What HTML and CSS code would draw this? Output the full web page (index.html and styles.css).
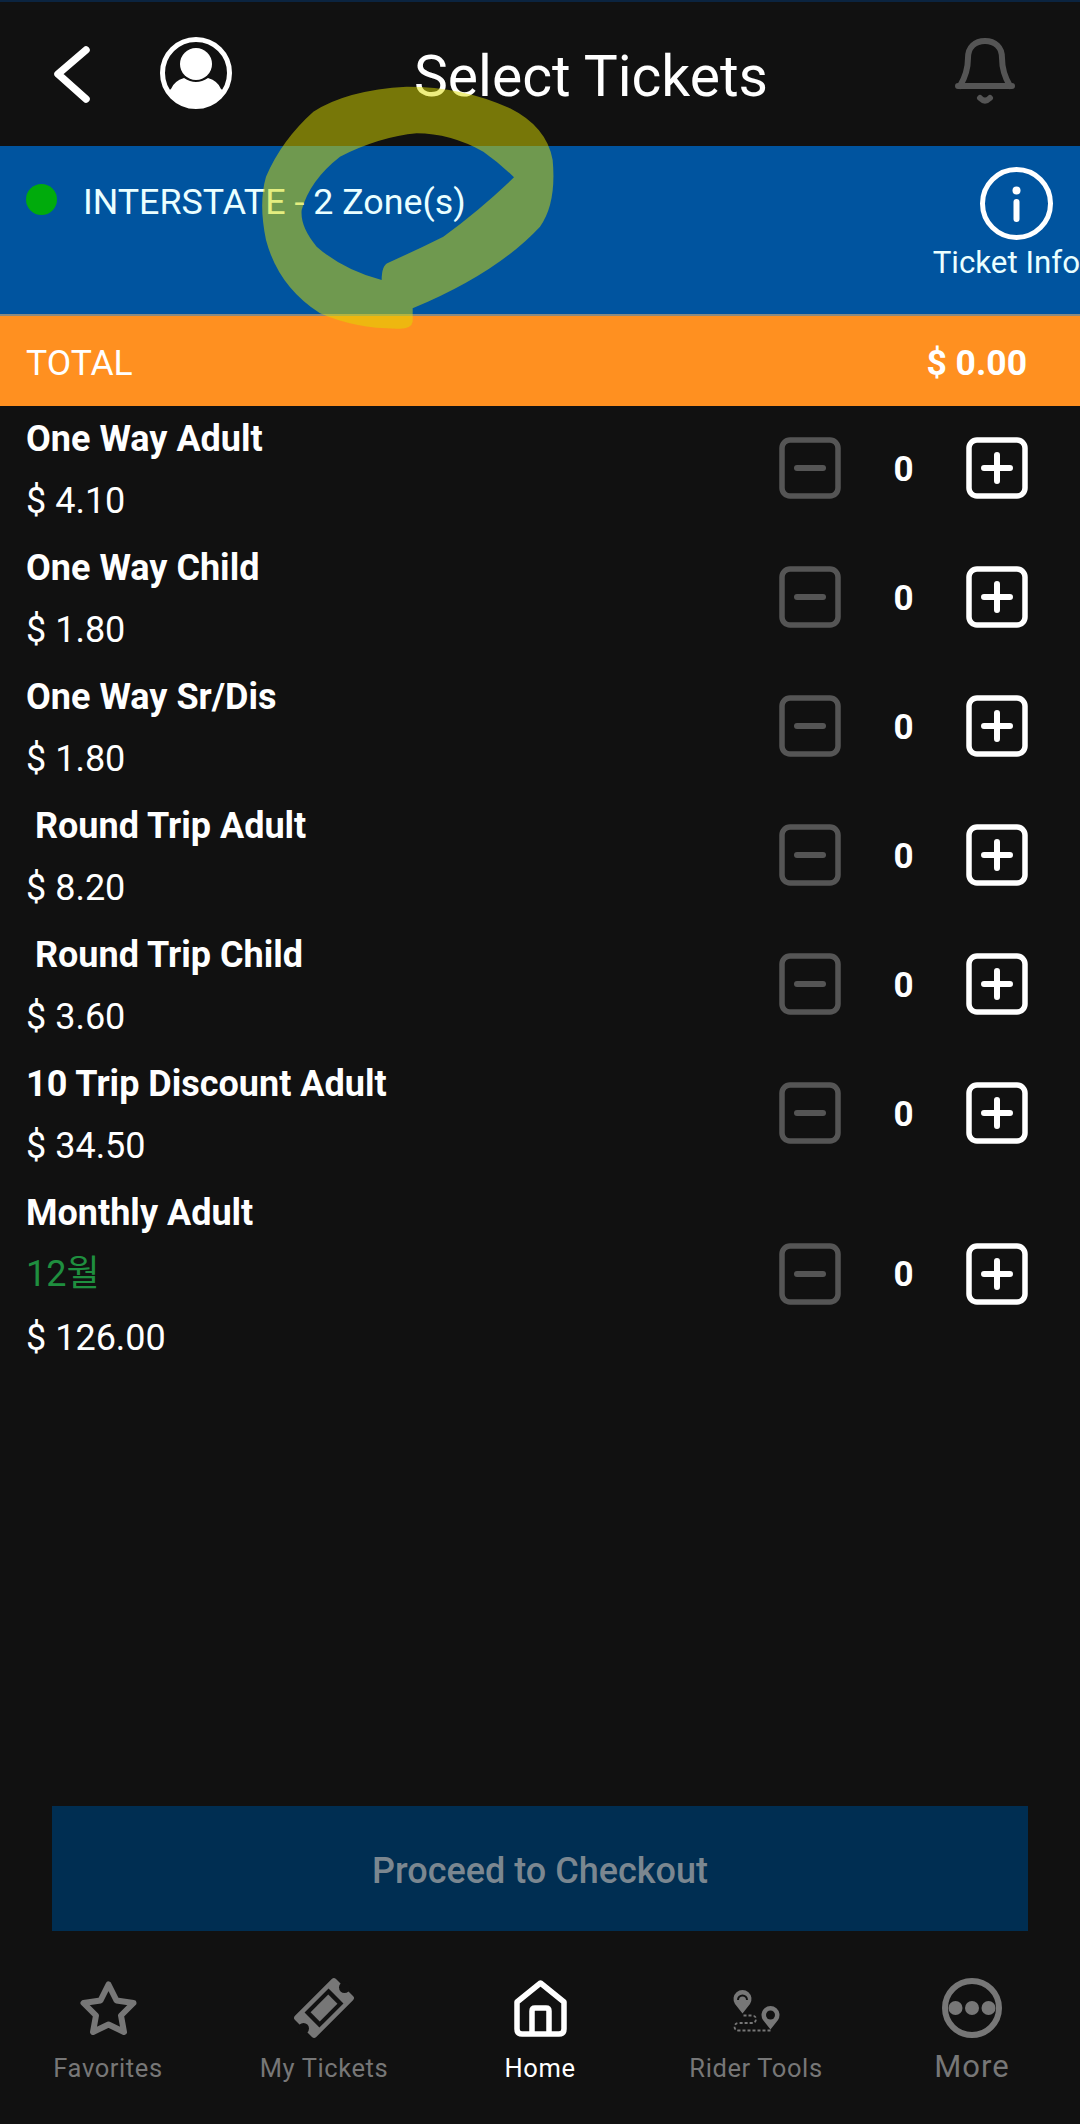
FILE: index.html
```html
<!DOCTYPE html>
<html lang="en">
<head>
    <meta charset="UTF-8">
    <meta name="viewport" content="width=device-width, initial-scale=1.0">
    <title>Select Tickets</title>
    <link rel="stylesheet" href="styles.css">
</head>
<body>
    <svg class="defs">
        <symbol id="minus" viewBox="0 0 62 62">
            <rect x="3" y="3" width="56" height="56" rx="8" fill="none" stroke="#555" stroke-width="5.5"></rect>
            <path d="M18 31H44" stroke="#555" stroke-width="6" stroke-linecap="round"></path>
        </symbol>
        <symbol id="plus" viewBox="0 0 62 62">
            <rect x="3" y="3" width="56" height="56" rx="8" fill="none" stroke="#fff" stroke-width="5.5"></rect>
            <path d="M18 31H44M31 18V44" stroke="#fff" stroke-width="6" stroke-linecap="round"></path>
        </symbol>
    </svg>

    <header class="top-bar">
        <svg class="back-icon" width="44" height="64" viewBox="0 0 44 64">
            <path d="M36 8L8 32L36 57" fill="none" stroke="#fff" stroke-width="7.5" stroke-linecap="round" stroke-linejoin="round"></path>
        </svg>
        <svg class="profile-icon" width="72" height="72" viewBox="0 0 72 72">
            <circle cx="36" cy="36" r="33.5" fill="none" stroke="#fff" stroke-width="5"></circle>
            <circle cx="36" cy="27" r="16" fill="#fff"></circle>
            <path d="M8 54L11 52Q14 44 24 41Q36 49 48 41Q58 44 61 52L64 54A33 33 0 0 1 8 54Z" fill="#fff"></path>
        </svg>
        <h1 class="page-title">Select Tickets</h1>
        <svg class="bell-icon" width="60" height="66" viewBox="0 0 60 66">
            <path d="M3 48H57M5 48C11 38 13 30 13 20C13 9 20 3 30 3C40 3 47 9 47 20C47 30 49 38 55 48" fill="none" stroke="#555" stroke-width="6" stroke-linecap="round"></path>
            <path d="M25 60Q30 65 35 60" fill="none" stroke="#555" stroke-width="6" stroke-linecap="round"></path>
        </svg>
    </header>

    <section class="zone-bar">
        <span class="zone-dot"></span>
        <span class="zone-name">INTERSTATE - 2 Zone(s)</span>
        <div class="ticket-info">
            <svg class="info-icon" width="73" height="73" viewBox="0 0 73 73">
                <circle cx="36.5" cy="36.5" r="34" fill="none" stroke="#fff" stroke-width="5"></circle>
                <circle cx="36.5" cy="23.5" r="4" fill="#fff"></circle>
                <path d="M36.5 35V52" stroke="#fff" stroke-width="6" stroke-linecap="round"></path>
            </svg>
            <span class="info-label">Ticket Info</span>
        </div>
    </section>

    <section class="total-bar">
        <span>TOTAL</span>
        <span class="total-amount">$ 0.00</span>
    </section>

    <main class="tickets">
        <div class="ticket-row">
            <div class="ticket-text">
                <div class="ticket-name">One Way Adult</div>
                <div class="ticket-price">$ 4.10</div>
            </div>
            <div class="stepper">
                <svg class="step-btn"><use href="#minus"></use></svg>
                <span class="step-count">0</span>
                <svg class="step-btn"><use href="#plus"></use></svg>
            </div>
        </div>
        <div class="ticket-row">
            <div class="ticket-text">
                <div class="ticket-name">One Way Child</div>
                <div class="ticket-price">$ 1.80</div>
            </div>
            <div class="stepper">
                <svg class="step-btn"><use href="#minus"></use></svg>
                <span class="step-count">0</span>
                <svg class="step-btn"><use href="#plus"></use></svg>
            </div>
        </div>
        <div class="ticket-row">
            <div class="ticket-text">
                <div class="ticket-name">One Way Sr/Dis</div>
                <div class="ticket-price">$ 1.80</div>
            </div>
            <div class="stepper">
                <svg class="step-btn"><use href="#minus"></use></svg>
                <span class="step-count">0</span>
                <svg class="step-btn"><use href="#plus"></use></svg>
            </div>
        </div>
        <div class="ticket-row">
            <div class="ticket-text">
                <div class="ticket-name"> Round Trip Adult</div>
                <div class="ticket-price">$ 8.20</div>
            </div>
            <div class="stepper">
                <svg class="step-btn"><use href="#minus"></use></svg>
                <span class="step-count">0</span>
                <svg class="step-btn"><use href="#plus"></use></svg>
            </div>
        </div>
        <div class="ticket-row">
            <div class="ticket-text">
                <div class="ticket-name"> Round Trip Child</div>
                <div class="ticket-price">$ 3.60</div>
            </div>
            <div class="stepper">
                <svg class="step-btn"><use href="#minus"></use></svg>
                <span class="step-count">0</span>
                <svg class="step-btn"><use href="#plus"></use></svg>
            </div>
        </div>
        <div class="ticket-row">
            <div class="ticket-text">
                <div class="ticket-name">10 Trip Discount Adult</div>
                <div class="ticket-price">$ 34.50</div>
            </div>
            <div class="stepper">
                <svg class="step-btn"><use href="#minus"></use></svg>
                <span class="step-count">0</span>
                <svg class="step-btn"><use href="#plus"></use></svg>
            </div>
        </div>
        <div class="ticket-row">
            <div class="ticket-text">
                <div class="ticket-name">Monthly Adult</div>
                <div class="ticket-month">12월</div>
                <div class="ticket-price">$ 126.00</div>
            </div>
            <div class="stepper">
                <svg class="step-btn"><use href="#minus"></use></svg>
                <span class="step-count">0</span>
                <svg class="step-btn"><use href="#plus"></use></svg>
            </div>
        </div>
    </main>

    <button class="checkout-btn" type="button">Proceed to Checkout</button>

    <nav class="bottom-nav">
        <div class="nav-item">
            <span class="nav-icon">
                <svg width="57" height="54" viewBox="0 0 57 54">
                    <polygon points="28.5,3.5 36.5,19.5 53.5,22 41,34.5 44,51 28.5,43.5 13,51 16,34.5 3.5,22 20.5,19.5" fill="none" stroke="#777" stroke-width="6" stroke-linejoin="round"></polygon>
                </svg>
            </span>
            <span class="nav-label">Favorites</span>
        </div>
        <div class="nav-item">
            <span class="nav-icon">
                <svg width="62" height="64" viewBox="0 0 62 64">
                    <g transform="translate(31 32) rotate(-45)">
                        <rect x="-29" y="-15" width="58" height="30" rx="3" fill="#777"></rect>
                        <circle cx="-29" cy="0" r="5.5" fill="#111"></circle>
                        <circle cx="29" cy="0" r="5.5" fill="#111"></circle>
                        <rect x="-17" y="-10.5" width="34" height="21" fill="#111"></rect>
                        <rect x="-12.5" y="-6.5" width="25" height="13" fill="#777"></rect>
                    </g>
                </svg>
            </span>
            <span class="nav-label">My Tickets</span>
        </div>
        <div class="nav-item nav-active">
            <span class="nav-icon">
                <svg width="53" height="57" viewBox="0 0 53 57">
                    <path d="M26.5 3L50 22V49Q50 54 45 54H8Q3 54 3 49V22Z" fill="none" stroke="#fff" stroke-width="5.5" stroke-linejoin="round"></path>
                    <path d="M18 54V31Q18 28 21 28H32Q35 28 35 31V54" fill="none" stroke="#fff" stroke-width="5.5"></path>
                </svg>
            </span>
            <span class="nav-label">Home</span>
        </div>
        <div class="nav-item">
            <span class="nav-icon">
                <svg width="75" height="65" viewBox="-1.5 0 75 65">
                    <path d="M22 37.5L14.5 28A9 9 0 1 1 29.5 28Z" fill="#777"></path>
                    <path d="M17.5 24A4.5 4.5 0 0 1 26.5 24" fill="none" stroke="#111" stroke-width="2"></path>
                    <path d="M50 53.5L42.5 44A9 9 0 1 1 57.5 44Z" fill="#777"></path>
                    <circle cx="50" cy="39" r="4.5" fill="#111"></circle>
                    <path d="M23 39.5H32Q35.5 40 35.5 43Q35.5 47 31 47H19Q14 47 14 51Q14 54.5 19 54.5H50" fill="none" stroke="#777" stroke-width="1.8" stroke-dasharray="3 2"></path>
                </svg>
            </span>
            <span class="nav-label">Rider Tools</span>
        </div>
        <div class="nav-item">
            <span class="nav-icon">
                <svg width="60" height="60" viewBox="0 0 60 60">
                    <circle cx="30" cy="30" r="27" fill="none" stroke="#777" stroke-width="6"></circle>
                    <circle cx="13.5" cy="30" r="7" fill="#777"></circle>
                    <circle cx="30" cy="30" r="7" fill="#777"></circle>
                    <circle cx="46.5" cy="30" r="7" fill="#777"></circle>
                </svg>
            </span>
            <span class="nav-label nav-label-big">More</span>
        </div>
    </nav>

    <!-- highlighter scribble drawn on top of the screenshot -->
    <svg class="scribble" width="360" height="270" viewBox="0 0 1080 810">
        <path fill-rule="evenodd" fill="rgba(222, 222, 0, 0.5)" d="M548 715L548 755Q545 775 510 776Q380 778 270 730Q145 650 108 510Q85 400 108 320Q155 210 250 125Q350 60 530 50Q700 50 840 115Q950 170 968 270Q980 400 930 470Q800 610 548 715ZM455 630Q340 600 260 530Q210 470 215 420Q240 330 330 260Q450 200 560 190Q660 190 760 245Q810 280 852 322Q750 420 640 500Q560 540 475 578Q455 585 455 630Z"></path>
    </svg>
</body>
</html>
```

FILE: styles.css
```css
html, body {
    margin: 0;
    padding: 0;
}
body {
    position: relative;
    display: flex;
    flex-direction: column;
    width: 1080px;
    height: 2124px;
    overflow: hidden;
    background-color: #111;
    color: #fff;
    font-family: Roboto, "Noto Sans CJK KR", sans-serif;
}
.defs {
    display: none;
}
.top-bar {
    display: flex;
    align-items: center;
    flex-shrink: 0;
    box-sizing: border-box;
    height: 146px;
    border-top: 2px solid #0b2440;
}
.back-icon {
    margin-left: 50px;
    flex-shrink: 0;
}
.profile-icon {
    margin-left: 66px;
    margin-top: -2px;
    flex-shrink: 0;
}
.page-title {
    margin: 4px 0 0 182px;
    font-size: 57px;
    font-weight: 400;
    white-space: nowrap;
}
.bell-icon {
    margin-left: auto;
    margin-right: 65px;
    margin-top: -6px;
}
.zone-bar {
    display: flex;
    align-items: flex-start;
    flex-shrink: 0;
    box-sizing: border-box;
    height: 168px;
    padding-left: 26px;
    background-color: #00549f;
}
.zone-dot {
    width: 31px;
    height: 31px;
    margin-top: 38px;
    border-radius: 50%;
    background-color: #00ab0c;
}
.zone-name {
    margin: 35px 0 0 26px;
    font-size: 35.8px;
    line-height: 42px;
    color: #eaffff;
}
.ticket-info {
    display: flex;
    flex-direction: column;
    align-items: flex-end;
    margin-left: auto;
    padding-top: 21px;
}
.info-icon {
    margin-right: 27px;
}
.info-label {
    margin-top: 5px;
    font-size: 31.3px;
    line-height: 36px;
    color: #eaffff;
    white-space: nowrap;
}
.total-bar {
    display: flex;
    justify-content: space-between;
    align-items: center;
    flex-shrink: 0;
    box-sizing: border-box;
    height: 92px;
    padding: 4px 53px 0 26px;
    border-top: 2px solid #8a8a80;
    background-color: #ff9020;
    font-size: 35.5px;
}
.total-amount {
    font-weight: 700;
}
.tickets {
    flex: 1;
}
.ticket-row {
    display: flex;
    justify-content: space-between;
    align-items: center;
    padding: 0 52px 5px 26px;
}
.ticket-name {
    font-size: 36px;
    font-weight: 700;
    line-height: 66px;
    white-space: pre;
}
.ticket-price {
    font-size: 36px;
    line-height: 58px;
}
.ticket-month {
    margin-bottom: 6px;
    font-size: 36px;
    line-height: 57px;
    color: #1f8f3f;
}
.stepper {
    display: flex;
    align-items: center;
}
.step-btn {
    width: 62px;
    height: 62px;
}
.step-count {
    width: 125px;
    padding-top: 2px;
    font-size: 35px;
    font-weight: 700;
    text-align: center;
}
.checkout-btn {
    flex-shrink: 0;
    display: block;
    width: 976px;
    height: 125px;
    margin: 0 52px;
    padding: 5px 0 0;
    border: none;
    background-color: #002e52;
    color: #7b8790;
    font-family: inherit;
    font-size: 36px;
    font-weight: 500;
}
.bottom-nav {
    display: grid;
    grid-template-columns: repeat(5, 1fr);
    flex-shrink: 0;
    box-sizing: border-box;
    height: 193px;
    padding-top: 42px;
}
.nav-item {
    display: flex;
    flex-direction: column;
    align-items: center;
    color: #777;
}
.nav-icon {
    display: flex;
    align-items: center;
    justify-content: center;
    height: 70px;
}
.nav-label {
    margin-top: 7px;
    font-size: 25.5px;
    line-height: 36px;
    letter-spacing: 0.6px;
    white-space: nowrap;
}
.nav-label-big {
    margin-top: 6px;
    font-size: 31px;
    letter-spacing: 1px;
}
.nav-active {
    color: #fff;
}
.scribble {
    position: absolute;
    left: 230px;
    top: 70px;
    pointer-events: none;
}
```
